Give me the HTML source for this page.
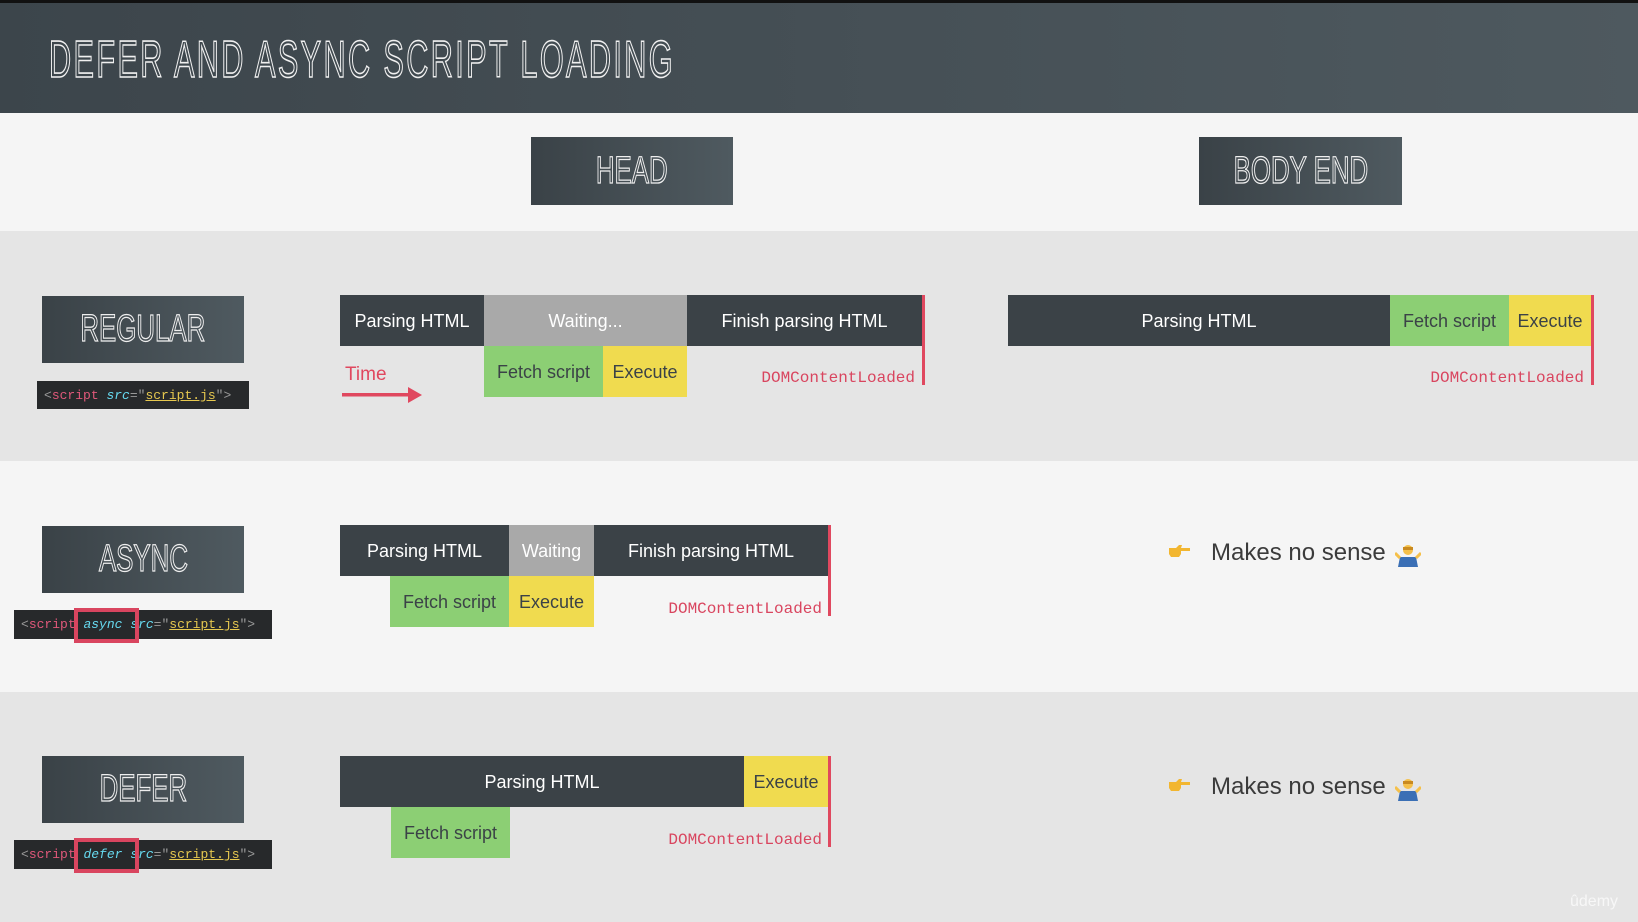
<!DOCTYPE html>
<html><head><meta charset="utf-8"><style>
*{margin:0;padding:0;box-sizing:border-box}
body{width:1638px;height:922px;overflow:hidden;position:relative;background:#e5e5e5;font-family:"Liberation Sans",sans-serif}
.abs{position:absolute}
.band{position:absolute;left:0;width:1638px}
.title{top:0;height:113px;background:linear-gradient(90deg,#3c454b,#4e595f);border-top:3px solid #111}
.title span{position:absolute;left:49px;top:27px;font-family:"Liberation Sans Narrow","Liberation Sans",sans-serif;font-size:52px;color:transparent;-webkit-text-stroke:1.6px #f0f0f0;letter-spacing:4px;transform:scaleX(0.59);transform-origin:left;white-space:nowrap;display:block}
.lbl{position:absolute;background:linear-gradient(90deg,#3a4247,#4f5a60);color:transparent;-webkit-text-stroke:1.3px #eee;font-family:"Liberation Sans Narrow","Liberation Sans",sans-serif;font-size:38px;display:flex;align-items:center;justify-content:center}
.lbl span{transform:scaleX(0.68);display:inline-block;white-space:nowrap}
.bar{position:absolute;display:flex;align-items:center;justify-content:center;font-size:18px;color:#fff;white-space:nowrap;padding-top:2px}
.d{background:#3b4247}.w{background:#a9a9a9}.g{background:#8ccf74;color:#3b4247}.y{background:#f0db4f;color:#3b4247}
.rl{position:absolute;width:3px;background:#e0485f}
.dom{position:absolute;font-family:"Liberation Mono",monospace;font-size:16px;color:#d9455f;text-align:right;width:220px}
.code{position:absolute;background:#27292b;font-family:"Liberation Mono",monospace;font-size:13px;color:#999;white-space:pre;line-height:1}
.code div{position:absolute;left:7px;top:8px;white-space:pre}
.p{color:#e0587a}.c{color:#66d9ef;font-style:italic}.s{color:#e6c84f;text-decoration:underline}
.rb{position:absolute;border:4px solid #d9455f}
.mns{position:absolute;font-size:24px;color:#3b3b3b}
</style></head><body>
<div class="band title"><span>DEFER AND ASYNC SCRIPT LOADING</span></div>
<div class="band" style="top:113px;height:118px;background:#f5f5f5"></div>
<div class="band" style="top:231px;height:230px;background:#e5e5e5"></div>
<div class="band" style="top:461px;height:231px;background:#f5f5f5"></div>
<div class="band" style="top:692px;height:230px;background:#e5e5e5"></div>

<div class="lbl" style="left:531px;top:137px;width:202px;height:68px"><span>HEAD</span></div>
<div class="lbl" style="left:1199px;top:137px;width:203px;height:68px"><span>BODY END</span></div>

<div class="lbl" style="left:42px;top:296px;width:202px;height:67px"><span>REGULAR</span></div>
<div class="lbl" style="left:42px;top:526px;width:202px;height:67px"><span>ASYNC</span></div>
<div class="lbl" style="left:42px;top:756px;width:202px;height:67px"><span>DEFER</span></div>

<div class="code" style="left:37px;top:381px;width:212px;height:28px"><div>&lt;<span class="p">script</span> <span class="c">src</span>="<span class="s">script.js</span>"&gt;</div></div>
<div class="code" style="left:14px;top:610px;width:258px;height:29px"><div>&lt;<span class="p">script</span> <span class="c">async</span> <span class="c">src</span>="<span class="s">script.js</span>"&gt;</div></div>
<div class="rb" style="left:74px;top:608px;width:65px;height:35px"></div>
<div class="code" style="left:14px;top:840px;width:258px;height:29px"><div>&lt;<span class="p">script</span> <span class="c">defer</span> <span class="c">src</span>="<span class="s">script.js</span>"&gt;</div></div>
<div class="rb" style="left:74px;top:838px;width:65px;height:35px"></div>

<div class="bar d" style="left:340px;top:295px;width:144px;height:51px">Parsing HTML</div>
<div class="bar w" style="left:484px;top:295px;width:203px;height:51px">Waiting...</div>
<div class="bar d" style="left:687px;top:295px;width:235px;height:51px">Finish parsing HTML</div>
<div class="rl" style="left:922px;top:295px;height:90px"></div>
<div class="bar g" style="left:484px;top:346px;width:119px;height:51px">Fetch script</div>
<div class="bar y" style="left:603px;top:346px;width:84px;height:51px">Execute</div>
<div class="dom" style="left:695px;top:369px">DOMContentLoaded</div>
<div class="abs" style="left:345px;top:364px;font-size:19px;color:#e0485f">Time</div>
<svg class="abs" style="left:342px;top:387px" width="82" height="16"><rect x="0" y="6" width="68" height="3.5" fill="#e0485f"/><polygon points="66,0 80,8 66,16" fill="#e0485f"/></svg>

<div class="bar d" style="left:1008px;top:295px;width:382px;height:51px">Parsing HTML</div>
<div class="bar g" style="left:1390px;top:295px;width:119px;height:51px">Fetch script</div>
<div class="bar y" style="left:1509px;top:295px;width:82px;height:51px">Execute</div>
<div class="rl" style="left:1591px;top:295px;height:90px"></div>
<div class="dom" style="left:1364px;top:369px">DOMContentLoaded</div>

<div class="bar d" style="left:340px;top:525px;width:169px;height:51px">Parsing HTML</div>
<div class="bar w" style="left:509px;top:525px;width:85px;height:51px">Waiting</div>
<div class="bar d" style="left:594px;top:525px;width:234px;height:51px">Finish parsing HTML</div>
<div class="rl" style="left:828px;top:525px;height:91px"></div>
<div class="bar g" style="left:390px;top:576px;width:119px;height:51px">Fetch script</div>
<div class="bar y" style="left:509px;top:576px;width:85px;height:51px">Execute</div>
<div class="dom" style="left:602px;top:600px">DOMContentLoaded</div>

<div class="bar d" style="left:340px;top:756px;width:404px;height:51px">Parsing HTML</div>
<div class="bar y" style="left:744px;top:756px;width:84px;height:51px">Execute</div>
<div class="rl" style="left:828px;top:756px;height:91px"></div>
<div class="bar g" style="left:391px;top:807px;width:119px;height:51px">Fetch script</div>
<div class="dom" style="left:602px;top:831px">DOMContentLoaded</div>

<svg class="abs" style="left:1167px;top:544px" width="24" height="14"><path d="M2 4h7l3-3h3l-1 3h9v3h-9v3l-2 3H4L2 10z" fill="#f2b630"/></svg>
<div class="mns" style="left:1211px;top:539px">Makes no sense</div>
<svg class="abs" style="left:1395px;top:543px" width="26" height="26"><circle cx="13" cy="7" r="5" fill="#f5c04a"/><path d="M8 4h10v3H8z" fill="#c98a20"/><path d="M5 14h16l2 10H3z" fill="#3a6fb5"/><path d="M0 10l5 5M26 10l-5 5" stroke="#f5c04a" stroke-width="3"/></svg>
<svg class="abs" style="left:1167px;top:778px" width="24" height="14"><path d="M2 4h7l3-3h3l-1 3h9v3h-9v3l-2 3H4L2 10z" fill="#f2b630"/></svg>
<div class="mns" style="left:1211px;top:773px">Makes no sense</div>
<svg class="abs" style="left:1395px;top:777px" width="26" height="26"><circle cx="13" cy="7" r="5" fill="#f5c04a"/><path d="M8 4h10v3H8z" fill="#c98a20"/><path d="M5 14h16l2 10H3z" fill="#3a6fb5"/><path d="M0 10l5 5M26 10l-5 5" stroke="#f5c04a" stroke-width="3"/></svg>

<div class="abs" style="left:1570px;top:893px;font-size:16px;color:#fff;opacity:.7">ûdemy</div>
</body></html>
